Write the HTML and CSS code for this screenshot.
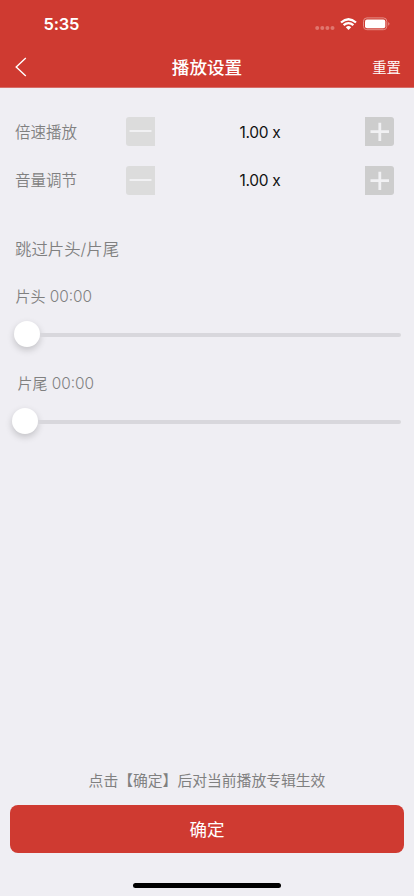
FILE: index.html
```html
<!DOCTYPE html>
<html lang="zh-CN">
<head>
<meta charset="utf-8">
<meta name="viewport" content="width=device-width, initial-scale=1">
<title>播放设置</title>
<link rel="stylesheet" href="styles.css">
</head>
<body>
<div class="screen">
  <header class="header">
    <div class="status">
      <span class="time">5:35</span>
      <svg class="indicators" width="76" height="16" viewBox="0 0 76 16">
        <g fill="#e0766e"><circle cx="2.2" cy="12" r="2"/><circle cx="7.3" cy="12" r="2"/><circle cx="12.4" cy="12" r="2"/><circle cx="17.5" cy="12" r="2"/></g>
        <g fill="none" stroke="#fff" stroke-width="2.3">
          <path d="M26 6.5Q33.5-.1 41 6.5"/>
          <path d="M28.6 9.2Q33.5 5 38.4 9.2"/>
        </g>
        <path d="M30.8 11.2Q33.5 9 36.2 11.2L33.5 14Z" fill="#fff"/>
        <rect x="48.5" y="1.9" width="23.3" height="11.8" rx="3.4" fill="none" stroke="#e58f88"/>
        <rect x="50" y="3.4" width="20.3" height="8.8" rx="2" fill="#fff"/>
        <path d="M73.2 6Q75.9 7.8 73.2 9.7Z" fill="#e58f88"/>
      </svg>
    </div>
    <nav class="nav">
      <svg class="back" width="12" height="20" viewBox="0 0 12 20"><path d="M10.8 1L1.2 10L10.8 19" fill="none" stroke="#fff" stroke-width="1.4"/></svg>
      <h1 class="title">播放设置</h1>
      <span class="reset">重置</span>
    </nav>
  </header>
  <main class="main">
    <div class="row">
      <span class="label">倍速播放</span>
      <span class="step minus"><svg width="29" height="29" viewBox="0 0 29 29"><path d="M3.5 14H25.5" stroke="#f1f1f3" stroke-width="2"/></svg></span>
      <span class="value">1.00 x</span>
      <span class="step plus"><svg width="29" height="29" viewBox="0 0 29 29"><path d="M5.5 14.6H24M14.8 5.7V24" stroke="#f1f1f3" stroke-width="2.8"/></svg></span>
    </div>
    <div class="row">
      <span class="label">音量调节</span>
      <span class="step minus"><svg width="29" height="29" viewBox="0 0 29 29"><path d="M3.5 14H25.5" stroke="#f1f1f3" stroke-width="2"/></svg></span>
      <span class="value">1.00 x</span>
      <span class="step plus"><svg width="29" height="29" viewBox="0 0 29 29"><path d="M5.5 14.6H24M14.8 5.7V24" stroke="#f1f1f3" stroke-width="2.8"/></svg></span>
    </div>
    <h2 class="section">跳过片头/片尾</h2>
    <div class="skip">
      <span class="skip-label">片头 <span class="digits">00:00</span></span>
      <div class="slider"><i class="thumb"></i><i class="track"></i></div>
    </div>
    <div class="skip tail">
      <span class="skip-label">片尾 <span class="digits">00:00</span></span>
      <div class="slider"><i class="thumb"></i><i class="track"></i></div>
    </div>
  </main>
  <footer class="footer">
    <p class="hint">点击【确定】后对当前播放专辑生效</p>
    <div class="confirm">确定</div>
    <div class="home"></div>
  </footer>
</div>
</body>
</html>
```
FILE: styles.css
```css
* { box-sizing: border-box; }
body { margin: 0; background: #efeef3; font-family: Inter, "Noto Sans CJK SC", sans-serif; }
h1, h2, p { margin: 0; font-weight: 400; }
svg { display: block; flex: none; }
.screen { height: 896px; display: flex; flex-direction: column; color: #808080; font-weight: 350; overflow: hidden; }
.header { height: 88px; flex: none; background: #cf3a31; border-bottom: 1px solid #d66d68; color: #fff; }
.status { height: 47px; display: flex; justify-content: space-between; align-items: center; padding: 0 23px 0 43.5px; }
.time { font-size: 16.5px; font-weight: 600; line-height: 20px; letter-spacing: -.2px; }
.nav { height: 40px; display: grid; grid-template-columns: 1fr auto 1fr; align-items: center; padding: 0 13px 0 15px; }
.title { margin-left: -2px; padding-top: 1px; font-size: 17.6px; font-weight: 500; line-height: 26px; }
.reset { justify-self: end; padding-top: 2px; font-size: 14.4px; line-height: 22px; }
.main { flex: 1; padding-top: 29px; }
.row { height: 29px; margin-bottom: 19.5px; padding: 0 20px 0 15px; display: flex; align-items: center; }
.label { width: 111px; padding-top: 2px; font-size: 15.5px; line-height: 24px; }
.step { width: 29px; height: 29px; flex: none; }
.minus { background: #dcdcdc; border-radius: 3px 0 0 3px; }
.plus { background: #cdcdcd; border-radius: 0 3px 3px 0; }
.value { flex: 1; padding-top: 2px; text-align: center; font-size: 15.5px; line-height: 22px; letter-spacing: -.3px; font-weight: 400; color: #111; }
.section { margin: 41px 0 0 15px; font-size: 16.4px; font-weight: 350; line-height: 26px; }
.skip { margin-top: 23px; padding: 0 13px 0 14px; }
.skip-label { display: block; margin-left: 1.5px; font-size: 15px; line-height: 24px; }
.digits { font-size: 15.4px; }
.slider { height: 26px; margin-top: 12px; display: flex; align-items: center; }
.thumb { width: 26px; height: 26px; flex: none; border-radius: 50%; background: #fff; box-shadow: 0 3px 7px rgba(0,0,0,.19); }
.track { flex: 1; height: 4px; margin-top: 2px; background: #d8d7dc; border-radius: 0 2px 2px 0; }
.tail { margin-top: 25px; padding-left: 12px; }
.tail .skip-label { margin-left: 5.5px; }
.footer { padding: 0 10px 8px; flex: none; }
.hint { text-align: center; font-size: 14.8px; line-height: 24px; }
.confirm { height: 48px; margin-top: 12px; padding-bottom: 2px; border-radius: 8px; background: #cf3a31; color: #fff; display: flex; align-items: center; justify-content: center; font-size: 17.5px; font-weight: 400; }
.home { width: 148px; height: 5px; margin: 30px auto 0; border-radius: 3px; background: #000; }
```
